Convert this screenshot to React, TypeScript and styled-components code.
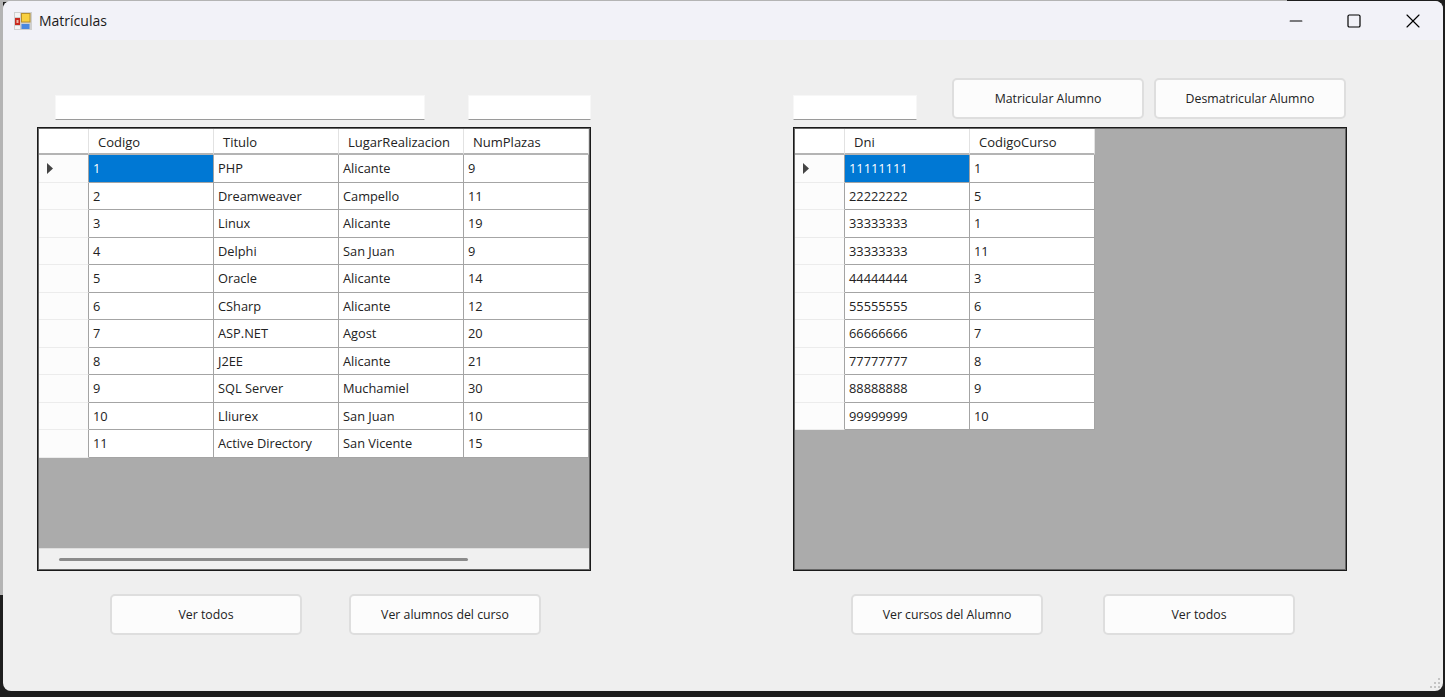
import React from 'react';
import styled, { createGlobalStyle } from 'styled-components';
import { Minus, Square, X } from 'lucide-react';

const GlobalStyle = createGlobalStyle`
  html, body {
    margin: 0;
    padding: 0;
    overflow: hidden;
  }
  * {
    box-sizing: border-box;
  }
`;

const Desktop = styled.div`
  width: 1445px;
  height: 697px;
  padding: 1px 2px 5px 2px;
  background:
    linear-gradient(#b4b4b4, #b4b4b4) left top / 1287px 2px no-repeat,
    linear-gradient(#b4b4b4, #b4b4b4) left top / 3px 595px no-repeat,
    #1e1e1e;
  font-family: "Open Sans", "Liberation Sans", sans-serif;
  font-size: 13px;
  color: #222;
`;

const Window = styled.div`
  position: relative;
  width: 1440px;
  height: 690px;
  margin-left: 1px;
  border-radius: 8px;
  overflow: hidden;
  background: #efefef;
`;

const TitleBar = styled.div`
  display: flex;
  align-items: center;
  height: 39px;
  padding-left: 11px;
  background: #f2f2f8;
`;

const AppIcon = styled.svg`
  width: 18px;
  height: 18px;
  margin-right: 7px;
  flex: none;
`;

const TitleText = styled.span`
  flex: 1;
  font-size: 14px;
  color: #1a1a1a;
`;

const WindowControl = styled.button`
  display: flex;
  align-items: center;
  justify-content: center;
  width: 58.5px;
  height: 39px;
  padding: 0;
  border: none;
  background: none;
  color: #000;
`;

const WindowControls = styled.div`
  display: flex;
  margin-right: 1px;
`;

const Content = styled.div`
  display: flex;
  gap: 202px;
  padding: 38px 0 0 34px;
`;

const Panel = styled.section`
  display: flex;
  flex-direction: column;
  width: 554px;
`;

const TopRow = styled.div<{ $pad: number; $gap: number }>`
  display: flex;
  align-items: flex-end;
  height: 42px;
  margin-bottom: 7px;
  padding-left: ${(p) => p.$pad}px;
  gap: ${(p) => p.$gap}px;
`;

const SearchBox = styled.div<{ $w: number }>`
  width: ${(p) => p.$w}px;
  height: 25px;
  background: #fff;
  border: 1px solid #f7f7f7;
  border-bottom: 1px solid #9a9a9a;
`;

const ActionButton = styled.button`
  width: 192px;
  height: 41px;
  padding: 0 0 1px;
  font-family: inherit;
  font-size: 12.3px;
  color: #222;
  background: #fcfcfc;
  border: 2px solid #dedede;
  border-radius: 5px;
`;

const TopActions = styled.div`
  display: flex;
  gap: 10px;
  align-self: flex-start;
`;

const BottomRow = styled.div<{ $pad: number; $gap: number }>`
  display: flex;
  margin-top: 23px;
  padding-left: ${(p) => p.$pad}px;
  gap: ${(p) => p.$gap}px;
`;

const GridFrame = styled.div`
  display: flex;
  flex-direction: column;
  height: 442px;
  margin: 1px;
  border: 1px solid #666;
  box-shadow: 0 0 0 1px #1a1a1a;
  background: #ababab;
`;

const Row = styled.div<{ $fit?: boolean }>`
  display: flex;
  flex: none;
  width: ${(p) => (p.$fit ? 'max-content' : '100%')};
  background: #fff;
`;

const CornerCell = styled.div`
  width: 50px;
  height: 26px;
  background: #fff;
  border-right: 1px solid #e2e2e2;
  border-bottom: 2px solid #b4b4b4;
`;

const HeaderCell = styled.div`
  width: 125px;
  height: 26px;
  padding: 4px 0 0 9px;
  background: #fff;
  border-right: 1px solid #e2e2e2;
  border-bottom: 2px solid #b4b4b4;
  white-space: nowrap;
`;

const RowHeader = styled.div`
  display: flex;
  align-items: center;
  width: 50px;
  height: 27.5px;
  padding-left: 8px;
  background: #fcfcfc;
  border-right: 1px solid #a4a4a4;
  border-bottom: 1px solid #ececec;
`;

const Arrow = styled.svg`
  width: 6px;
  height: 11px;
`;

const Cell = styled.div<{ $selected?: boolean }>`
  display: flex;
  align-items: center;
  width: 125px;
  height: 27.5px;
  padding-left: 4px;
  font-size: 12.8px;
  white-space: nowrap;
  background: ${(p) => (p.$selected ? '#0078d4' : '#fff')};
  color: ${(p) => (p.$selected ? '#fff' : '#222')};
  border-right: 1px solid #a4a4a4;
  border-bottom: 1px solid #a4a4a4;
`;

const EmptyArea = styled.div`
  flex: 1;
  background: #ababab;
`;

const ScrollBar = styled.div`
  display: flex;
  align-items: center;
  height: 21px;
  padding-left: 20px;
  background: #f0f0f0;
  border-top: 1px solid #dedede;
`;

const ScrollThumb = styled.div`
  width: 409px;
  height: 3px;
  border-radius: 2px;
  background: #8b8b8b;
`;

const Grip = styled.svg`
  position: absolute;
  right: 1px;
  bottom: 1px;
  width: 12px;
  height: 12px;
`;

const courses = [
  ['1', 'PHP', 'Alicante', '9'],
  ['2', 'Dreamweaver', 'Campello', '11'],
  ['3', 'Linux', 'Alicante', '19'],
  ['4', 'Delphi', 'San Juan', '9'],
  ['5', 'Oracle', 'Alicante', '14'],
  ['6', 'CSharp', 'Alicante', '12'],
  ['7', 'ASP.NET', 'Agost', '20'],
  ['8', 'J2EE', 'Alicante', '21'],
  ['9', 'SQL Server', 'Muchamiel', '30'],
  ['10', 'Lliurex', 'San Juan', '10'],
  ['11', 'Active Directory', 'San Vicente', '15'],
];

const enrolments = [
  ['11111111', '1'],
  ['22222222', '5'],
  ['33333333', '1'],
  ['33333333', '11'],
  ['44444444', '3'],
  ['55555555', '6'],
  ['66666666', '7'],
  ['77777777', '8'],
  ['88888888', '9'],
  ['99999999', '10'],
];

type DataGridProps = {
  columns: string[];
  rows: string[][];
  fit?: boolean;
};

const DataGrid = ({ columns, rows, fit }: DataGridProps) => (
  <GridFrame>
    <Row $fit={fit}>
      <CornerCell />
      {columns.map((c) => (
        <HeaderCell key={c}>{c}</HeaderCell>
      ))}
    </Row>
    {rows.map((row, i) => (
      <Row key={i} $fit={fit}>
        <RowHeader>
          {i === 0 && (
            <Arrow viewBox="0 0 6 11">
              <path d="M0 0 L6 5.5 L0 11 Z" fill="#444" />
            </Arrow>
          )}
        </RowHeader>
        {row.map((value, j) => (
          <Cell key={j} $selected={i === 0 && j === 0}>
            {value}
          </Cell>
        ))}
      </Row>
    ))}
    <EmptyArea />
    {!fit && (
      <ScrollBar>
        <ScrollThumb />
      </ScrollBar>
    )}
  </GridFrame>
);

export default function App() {
  return (
    <Desktop>
      <GlobalStyle />
      <Window>
        <TitleBar>
          <AppIcon viewBox="0 0 18 18">
            <rect x="0" y="0" width="18" height="18" fill="#cfcfcf" />
            <rect x="1" y="1" width="5" height="4" fill="#f4f4f4" />
            <rect x="1" y="6" width="5" height="7" fill="#c8281e" />
            <rect x="2.5" y="8" width="2" height="3" fill="#f0b8a8" />
            <rect x="1" y="14" width="5" height="3" fill="#f4f4f4" />
            <rect x="7" y="1" width="9.5" height="9.5" fill="#b8902a" />
            <rect x="8" y="2" width="7.5" height="7.5" fill="#f8d040" />
            <rect x="7.5" y="12" width="8" height="5" fill="#4a88e0" />
          </AppIcon>
          <TitleText>Matrículas</TitleText>
          <WindowControls>
            <WindowControl aria-label="Minimizar">
              <Minus size={20} strokeWidth={1.4} />
            </WindowControl>
            <WindowControl aria-label="Maximizar">
              <Square size={16} strokeWidth={1.8} />
            </WindowControl>
            <WindowControl aria-label="Cerrar">
              <X size={24} strokeWidth={1.15} />
            </WindowControl>
          </WindowControls>
        </TitleBar>
        <Content>
          <Panel>
            <TopRow $pad={18} $gap={43}>
              <SearchBox $w={370} />
              <SearchBox $w={123} />
            </TopRow>
            <DataGrid
              columns={['Codigo', 'Titulo', 'LugarRealizacion', 'NumPlazas']}
              rows={courses}
            />
            <BottomRow $pad={73} $gap={47}>
              <ActionButton>Ver todos</ActionButton>
              <ActionButton>Ver alumnos del curso</ActionButton>
            </BottomRow>
          </Panel>
          <Panel>
            <TopRow $pad={0} $gap={35}>
              <SearchBox $w={124} />
              <TopActions>
                <ActionButton>Matricular Alumno</ActionButton>
                <ActionButton>Desmatricular Alumno</ActionButton>
              </TopActions>
            </TopRow>
            <DataGrid columns={['Dni', 'CodigoCurso']} rows={enrolments} fit />
            <BottomRow $pad={58} $gap={60}>
              <ActionButton>Ver cursos del Alumno</ActionButton>
              <ActionButton>Ver todos</ActionButton>
            </BottomRow>
          </Panel>
        </Content>
        <Grip viewBox="0 0 12 12">
          <g fill="#c4c4c4">
            <rect x="8" y="0" width="2" height="2" />
            <rect x="4" y="4" width="2" height="2" />
            <rect x="8" y="4" width="2" height="2" />
            <rect x="0" y="8" width="2" height="2" />
            <rect x="4" y="8" width="2" height="2" />
            <rect x="8" y="8" width="2" height="2" />
          </g>
        </Grip>
      </Window>
    </Desktop>
  );
}
